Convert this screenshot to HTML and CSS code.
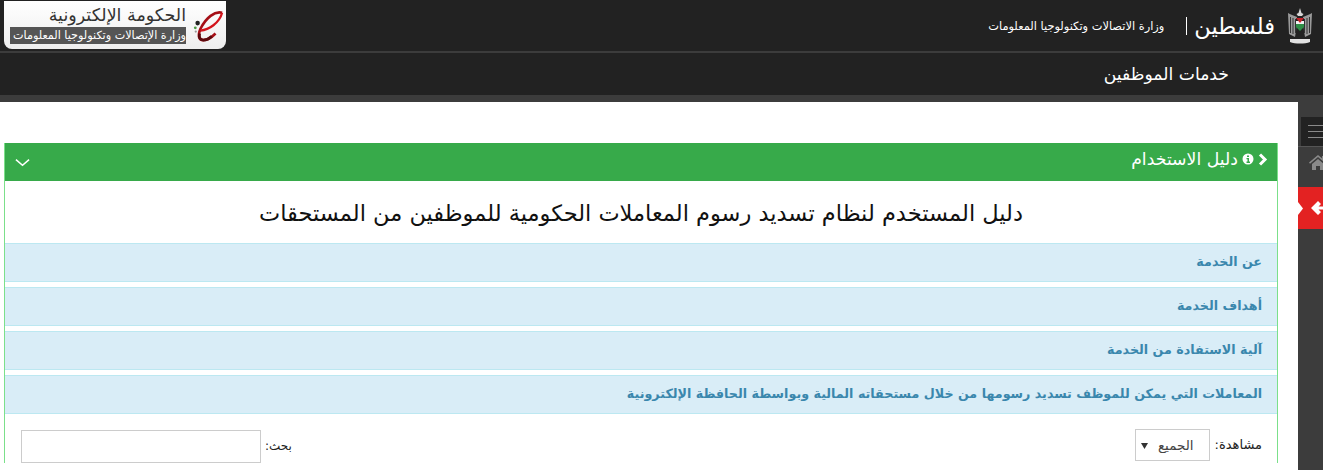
FILE: index.html
```html
<!DOCTYPE html>
<html lang="ar" dir="rtl">
<head>
    <meta charset="UTF-8">
    <title>خدمات الموظفين</title>
    <link rel="stylesheet" href="styles.css">
</head>
<body>
    <header class="top-bar">
        <div class="brand">
            <svg class="emblem" width="24" height="36" viewBox="0 0 24 36">
                <path d="M12 0l1.500 5 2 1-1.500 2h-4L8.500 6l2-1z" fill="#d8d8d8"/>
                <path d="M9 9C6 8 2 6 0 5l1 21 6 3 1-6z" fill="#9a9a9a"/>
                <path d="M15 9c3-1 7-3 9-4l-1 21-6 3-1-6z" fill="#9a9a9a"/>
                <path d="M2.500 9v16M5 10v16M7.500 11v14M16.500 11v14M19 10v16M21.500 9v16" stroke="#333" stroke-width="1"/>
                <path d="M8 10h8v3H8z" fill="#222"/>
                <path d="M8 13h8v3H8z" fill="#f2f2f2"/>
                <path d="M8 16h8v3l-4 4-4-4z" fill="#2f8f46"/>
                <path d="M8 10h8l-4 5z" fill="#c8242b"/>
                <path d="M2 31h20v3c-5 2-15 2-20 0z" fill="#e2e2e2"/>
            </svg>
            <span class="country">فلسطين</span>
            <span class="ministry">وزارة الاتصالات وتكنولوجيا المعلومات</span>
        </div>
        <div class="gov-logo">
            <svg class="logo-e" width="34" height="42" viewBox="0 0 34 42">
                <path d="M32 8C24 6 15 13 9 25c-3 7-2 12 3 12 4 0 9-3 13-7" fill="none" stroke="#a50f16" stroke-width="2.800"/>
                <path d="M9 27c9-1 20-8 23-19" fill="none" stroke="#d3141c" stroke-width="2.400"/>
                <path d="M8 30c-1 5 1 7 4 7 3 0 6-1 9-4" fill="none" stroke="#5c0a0e" stroke-width="3"/>
                <circle cx="6" cy="19" r="2.400" fill="#222"/>
                <circle cx="3.500" cy="24" r="1.500" fill="#4f9b45"/>
                <circle cx="4" cy="28" r="1.200" fill="#999"/>
            </svg>
            <div class="gov-text">
                <div class="gov-title">الحكومة الإلكترونية</div>
                <div class="gov-sub">وزارة الإتصالات وتكنولوجيا المعلومات</div>
            </div>
        </div>
    </header>
    <nav class="nav-bar"><span class="nav-title">خدمات الموظفين</span></nav>

    <div class="layout">
        <aside class="side-bar">
            <div class="side-toggle">
                <span></span><span></span><span></span>
            </div>
            <div class="side-home">
                <svg width="18" height="16" viewBox="0 0 18 16">
                    <path d="M9 1L0 8.500l1 1.200L9 3l8 6.700 1-1.200-3-2.500V2h-2v2.200z" fill="#8a8a8a"/>
                    <path d="M3 10l6-5 6 5v6h-4v-4H7v4H3z" fill="#8a8a8a"/>
                </svg>
            </div>
            <div class="side-back">
                <i class="side-notch"></i>
                <svg class="back-arrow" width="22" height="16" viewBox="0 0 22 16">
                    <path d="M8 1l3 3-2.500 2.500H22v3H8.500L11 12l-3 3-7-7z" fill="#fff"/>
                </svg>
            </div>
        </aside>

        <main class="content">
            <section class="panel">
                <div class="panel-head">
                    <span class="panel-title">
                        <svg width="10" height="13" viewBox="0 0 10 13"><path d="M2 1.500L7 6.500 2 11.500" fill="none" stroke="#fff" stroke-width="3"/></svg>
                        <svg width="12" height="12" viewBox="0 0 12 12"><circle cx="6" cy="6" r="5.500" fill="#fff"/><path d="M5 2.500h2V4H5zM4.500 5H7v3.500h1V10H4.500V8.500h1V6.200h-1z" fill="#37aa4a"/></svg>
                        دليل الاستخدام
                    </span>
                    <svg class="panel-caret" width="15" height="9" viewBox="0 0 16 9"><path d="M1 1.500l7 6 7-6" fill="none" stroke="#fff" stroke-width="1.600"/></svg>
                </div>
                <div class="panel-body">
                    <h1 class="guide-title">دليل المستخدم لنظام تسديد رسوم المعاملات الحكومية للموظفين من المستحقات</h1>
                    <div class="acc-list">
                        <div class="acc-row">عن الخدمة</div>
                        <div class="acc-row">أهداف الخدمة</div>
                        <div class="acc-row">آلية الاستفادة من الخدمة</div>
                        <div class="acc-row">المعاملات التي يمكن للموظف تسديد رسومها من خلال مستحقاته المالية وبواسطة الحافظة الإلكترونية</div>
                    </div>
                    <div class="table-tools">
                        <label class="tool">مشاهدة:
                            <select class="page-size"><option>الجميع</option></select>
                        </label>
                        <label class="tool tool-search">بحث:
                            <input class="search-box" type="text">
                        </label>
                    </div>
                </div>
            </section>
        </main>
    </div>
</body>
</html>
```

FILE: styles.css
```css
* {
    box-sizing: border-box;
}
html, body {
    height: 470px;
    overflow: hidden;
}
body {
    margin: 0;
    background-color: #3c3c3c;
    font-family: "DejaVu Sans", "Open Sans", sans-serif;
    font-size: 12px;
    color: #222;
}
.top-bar {
    height: 53px;
    background-color: #222;
    border-bottom: 2px solid #3c3c3c;
    display: flex;
    justify-content: space-between;
    padding: 1px 11px 0 4px;
}
.brand {
    display: flex;
    align-items: center;
    padding-bottom: 1px;
    color: #fff;
}
.emblem {
    margin-left: 13px;
}
.country {
    font-size: 22.5px;
    padding-left: 7px;
    border-left: 1px solid #fff;
    line-height: 18px;
    margin-left: 22px;
}
.ministry {
    font-size: 11.4px;
}
.gov-logo {
    width: 222px;
    height: 48px;
    background: linear-gradient(#fff, #eee);
    border-radius: 0 0 8px 8px;
    display: flex;
    align-items: center;
    padding: 0 2px 0 6px;
    gap: 6px;
}
.gov-text {
    align-self: flex-start;
    padding-top: 3px;
}
.gov-title {
    font-size: 17.5px;
    color: #333;
    line-height: 23px;
}
.gov-sub {
    width: 176px;
    height: 17px;
    background-color: #555;
    color: #fff;
    font-size: 11.2px;
    line-height: 17px;
    white-space: nowrap;
    overflow: hidden;
}
.nav-bar {
    height: 42px;
    background-color: #222;
    padding-right: 94px;
    display: flex;
    align-items: center;
    color: #fff;
    font-size: 17.2px;
}
.layout {
    height: 375px;
    padding-top: 7px;
    display: flex;
}
.side-bar {
    width: 25px;
    padding-top: 15px;
    background-color: #3c3c3c;
    direction: ltr;
    overflow: hidden;
}
.side-toggle {
    width: 22px;
    height: 29px;
    margin-left: 3px;
    background-color: #222;
    display: flex;
    flex-direction: column;
    justify-content: center;
    gap: 5px;
    padding-left: 7px;
}
.side-toggle span {
    display: block;
    height: 1px;
    background-color: #8a8a8a;
}
.side-home {
    height: 41px;
    border-top: 1px solid #555;
    padding: 7px 0 0 11px;
    white-space: nowrap;
}
.side-back {
    position: relative;
    height: 42px;
    background-color: #e32222;
    padding: 13px 0 0 12px;
    white-space: nowrap;
}
.side-notch {
    position: absolute;
    left: 0;
    top: 15px;
    width: 5px;
    height: 13px;
    background-color: #fff;
    clip-path: polygon(0 0, 100% 50%, 0 100%);
}
.content {
    flex: 1;
    background-color: #fff;
    padding: 41px 20px 0 4px;
}
.panel {
    border-style: solid;
    border-color: #7be08a;
    border-width: 0 1px;
}
.panel-head {
    height: 38px;
    background-color: #37aa4a;
    color: #fff;
    display: flex;
    justify-content: space-between;
    align-items: center;
    padding: 0 9px 0 10px;
}
.panel-title {
    font-size: 17.3px;
    display: flex;
    align-items: center;
    gap: 4px;
    padding-bottom: 6px;
}
.panel-caret {
    margin-top: 1px;
}
.guide-title {
    margin: 0;
    height: 62px;
    font-size: 22.5px;
    font-weight: normal;
    color: #111;
    text-align: center;
    line-height: 64px;
    white-space: nowrap;
}
.acc-list {
    display: flex;
    flex-direction: column;
    gap: 5px;
}
.acc-row {
    height: 39px;
    background-color: #d9edf7;
    border-top: 1px solid #bce8f1;
    border-bottom: 1px solid #bce8f1;
    color: #3a87ad;
    font-size: 12.7px;
    font-weight: bold;
    line-height: 35px;
    padding-right: 15px;
}
.table-tools {
    display: flex;
    justify-content: space-between;
    padding: 16px 15px 0 16px;
}
.tool {
    display: flex;
    align-items: flex-start;
    gap: 5px;
    font-size: 13px;
    line-height: 30px;
}
.tool-search {
    font-size: 12px;
    line-height: 32px;
    gap: 4px;
}
.page-size {
    appearance: none;
    width: 75px;
    height: 32px;
    margin: -1px 0 0;
    border: 1px solid #ccc;
    border-radius: 0;
    background: #fff url("data:image/svg+xml,%3Csvg xmlns='http://www.w3.org/2000/svg' width='7' height='6'%3E%3Cpath d='M0 0h7L3.500 6z' fill='%23333'/%3E%3C/svg%3E") no-repeat 5px 13px;
    font-family: inherit;
    font-size: 13.5px;
    color: #444;
    padding: 0 15px 0 0;
}
.search-box {
    width: 240px;
    height: 33px;
    border: 1px solid #ccc;
    background-color: #fff;
    margin: 0;
}
```
